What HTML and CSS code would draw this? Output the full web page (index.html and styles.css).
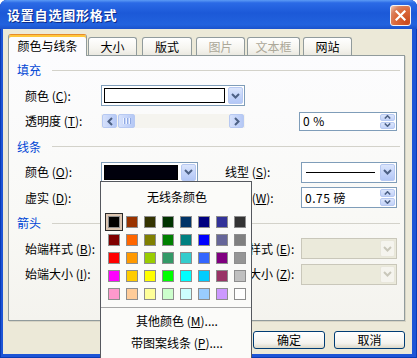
FILE: index.html
```html
<!DOCTYPE html>
<html lang="zh-CN">
<head>
<meta charset="utf-8">
<title>设置自选图形格式</title>
<link rel="stylesheet" href="styles.css">
</head>
<body>
<div class="window">
  <div class="titlebar">
    <span class="title">设置自选图形格式</span>
    <span class="close"><svg width="11" height="11" viewBox="0 0 11 11"><path d="M1.5 1.5 L9.5 9.5 M9.5 1.5 L1.5 9.5" stroke="#fff" stroke-width="2.2" stroke-linecap="square"/></svg></span>
  </div>
  <div class="client">
    <div class="tabs">
      <div class="tab active">颜色与线条</div>
      <div class="tab t-size">大小</div>
      <div class="tab t-layout">版式</div>
      <div class="tab t-pic disabled">图片</div>
      <div class="tab t-text disabled">文本框</div>
      <div class="tab t-web">网站</div>
    </div>
    <div class="panel">
      <div class="grp h26"><span>填充</span></div>
      <div class="row h25">
        <span class="lbl">颜色 (<u>C</u>):</span>
        <div class="combo w144">
          <div class="cval fill-white"></div>
          <span class="ddbtn"><svg width="9" height="6" viewBox="0 0 9 6"><path d="M1 1 L4.5 4.5 L8 1" fill="none" stroke="#4d6185" stroke-width="2"/></svg></span>
        </div>
      </div>
      <div class="row h26">
        <span class="lbl">透明度 (<u>T</u>):</span>
        <div class="slider">
          <span class="sbtn"><svg width="6" height="9" viewBox="0 0 6 9"><path d="M5 1 L1.5 4.5 L5 8" fill="none" stroke="#4d6185" stroke-width="2"/></svg></span>
          <span class="thumb"><i></i><i></i><i></i></span>
          <span class="track"></span>
          <span class="sbtn"><svg width="6" height="9" viewBox="0 0 6 9"><path d="M1 1 L4.5 4.5 L1 8" fill="none" stroke="#4d6185" stroke-width="2"/></svg></span>
        </div>
        <div class="spin spin-tr">
          <span class="sval">0 %</span>
          <span class="sbtns">
            <span class="sb"><svg width="7" height="4" viewBox="0 0 7 4"><path d="M0.8 3.5 L3.5 0.8 L6.2 3.5" fill="none" stroke="#4d6185" stroke-width="1.6"/></svg></span>
            <span class="sb"><svg width="7" height="4" viewBox="0 0 7 4"><path d="M0.8 0.5 L3.5 3.2 L6.2 0.5" fill="none" stroke="#4d6185" stroke-width="1.6"/></svg></span>
          </span>
        </div>
      </div>
      <div class="grp h25"><span>线条</span></div>
      <div class="row h26">
        <span class="lbl">颜色 (<u>O</u>):</span>
        <div class="combo w97">
          <div class="cval fill-black"></div>
          <span class="ddbtn"><svg width="9" height="6" viewBox="0 0 9 6"><path d="M1 1 L4.5 4.5 L8 1" fill="none" stroke="#4d6185" stroke-width="2"/></svg></span>
        </div>
        <span class="lbl rl">线型 (<u>S</u>):</span>
        <div class="combo w96">
          <div class="cval line"><i></i></div>
          <span class="ddbtn"><svg width="9" height="6" viewBox="0 0 9 6"><path d="M1 1 L4.5 4.5 L8 1" fill="none" stroke="#4d6185" stroke-width="2"/></svg></span>
        </div>
      </div>
      <div class="row h25">
        <span class="lbl">虚实 (<u>D</u>):</span>
        <div class="combo w97">
          <div class="cval line"><i></i></div>
          <span class="ddbtn"><svg width="9" height="6" viewBox="0 0 9 6"><path d="M1 1 L4.5 4.5 L8 1" fill="none" stroke="#4d6185" stroke-width="2"/></svg></span>
        </div>
        <span class="lbl rl">粗细 (<u>W</u>):</span>
        <div class="spin w96">
          <span class="sval">0.75 磅</span>
          <span class="sbtns">
            <span class="sb"><svg width="7" height="4" viewBox="0 0 7 4"><path d="M0.8 3.5 L3.5 0.8 L6.2 3.5" fill="none" stroke="#4d6185" stroke-width="1.6"/></svg></span>
            <span class="sb"><svg width="7" height="4" viewBox="0 0 7 4"><path d="M0.8 0.5 L3.5 3.2 L6.2 0.5" fill="none" stroke="#4d6185" stroke-width="1.6"/></svg></span>
          </span>
        </div>
      </div>
      <div class="grp h26"><span>箭头</span></div>
      <div class="row h25">
        <span class="lbl">始端样式 (<u>B</u>):</span>
        <div class="combo w97 dis">
          <div class="cval"></div>
          <span class="ddbtn"><svg width="9" height="6" viewBox="0 0 9 6"><path d="M1 1 L4.5 4.5 L8 1" fill="none" stroke="#c9c7ba" stroke-width="2"/></svg></span>
        </div>
        <span class="lbl rl">末端样式 (<u>E</u>):</span>
        <div class="combo w96 dis">
          <div class="cval"></div>
          <span class="ddbtn"><svg width="9" height="6" viewBox="0 0 9 6"><path d="M1 1 L4.5 4.5 L8 1" fill="none" stroke="#c9c7ba" stroke-width="2"/></svg></span>
        </div>
      </div>
      <div class="row h26">
        <span class="lbl">始端大小 (<u>I</u>):</span>
        <div class="combo w97 dis">
          <div class="cval"></div>
          <span class="ddbtn"><svg width="9" height="6" viewBox="0 0 9 6"><path d="M1 1 L4.5 4.5 L8 1" fill="none" stroke="#c9c7ba" stroke-width="2"/></svg></span>
        </div>
        <span class="lbl rl">末端大小 (<u>Z</u>):</span>
        <div class="combo w96 dis">
          <div class="cval"></div>
          <span class="ddbtn"><svg width="9" height="6" viewBox="0 0 9 6"><path d="M1 1 L4.5 4.5 L8 1" fill="none" stroke="#c9c7ba" stroke-width="2"/></svg></span>
        </div>
      </div>
    </div>
    <div class="btns">
      <span class="btn">确定</span>
      <span class="btn">取消</span>
    </div>
  </div>
  <div class="popup">
    <div class="ptitle">无线条颜色</div>
    <div class="grid">
      <span class="cell sel"><i style="--c:#000000"></i></span>
      <span class="cell"><i style="--c:#993300"></i></span>
      <span class="cell"><i style="--c:#333300"></i></span>
      <span class="cell"><i style="--c:#003300"></i></span>
      <span class="cell"><i style="--c:#003366"></i></span>
      <span class="cell"><i style="--c:#000080"></i></span>
      <span class="cell"><i style="--c:#333399"></i></span>
      <span class="cell"><i style="--c:#333333"></i></span>
      <span class="cell"><i style="--c:#800000"></i></span>
      <span class="cell"><i style="--c:#ff6600"></i></span>
      <span class="cell"><i style="--c:#808000"></i></span>
      <span class="cell"><i style="--c:#008000"></i></span>
      <span class="cell"><i style="--c:#008080"></i></span>
      <span class="cell"><i style="--c:#0000ff"></i></span>
      <span class="cell"><i style="--c:#666699"></i></span>
      <span class="cell"><i style="--c:#808080"></i></span>
      <span class="cell"><i style="--c:#ff0000"></i></span>
      <span class="cell"><i style="--c:#ff9900"></i></span>
      <span class="cell"><i style="--c:#99cc00"></i></span>
      <span class="cell"><i style="--c:#339966"></i></span>
      <span class="cell"><i style="--c:#33cccc"></i></span>
      <span class="cell"><i style="--c:#3366ff"></i></span>
      <span class="cell"><i style="--c:#800080"></i></span>
      <span class="cell"><i style="--c:#969696"></i></span>
      <span class="cell"><i style="--c:#ff00ff"></i></span>
      <span class="cell"><i style="--c:#ffcc00"></i></span>
      <span class="cell"><i style="--c:#ffff00"></i></span>
      <span class="cell"><i style="--c:#00ff00"></i></span>
      <span class="cell"><i style="--c:#00ffff"></i></span>
      <span class="cell"><i style="--c:#00ccff"></i></span>
      <span class="cell"><i style="--c:#993366"></i></span>
      <span class="cell"><i style="--c:#c0c0c0"></i></span>
      <span class="cell"><i style="--c:#ff99cc"></i></span>
      <span class="cell"><i style="--c:#ffcc99"></i></span>
      <span class="cell"><i style="--c:#ffff99"></i></span>
      <span class="cell"><i style="--c:#ccffcc"></i></span>
      <span class="cell"><i style="--c:#ccffff"></i></span>
      <span class="cell"><i style="--c:#99ccff"></i></span>
      <span class="cell"><i style="--c:#cc99ff"></i></span>
      <span class="cell"><i style="--c:#ffffff"></i></span>
    </div>
    <div class="psep"></div>
    <div class="pitem">其他颜色 (<u>M</u>)....</div>
    <div class="pitem">带图案线条 (<u>P</u>)....</div>
  </div>
</div>
</body>
</html>
```
FILE: styles.css
```css
* { box-sizing: border-box; }
html, body { margin: 0; padding: 0; }
body {
  width: 417px;
  height: 358px;
  overflow: hidden;
  position: relative;
  background: #fff;
  font-family: "Noto Sans CJK SC", "Noto Sans", sans-serif;
  font-size: 12px;
  line-height: 16px;
  color: #000;
}
u { text-decoration: underline; text-underline-offset: 1px; }

.window {
  width: 417px;
  height: 358px;
  display: flex;
  flex-direction: column;
  background: #1d55d6;
  border-radius: 7px 7px 0 0;
  box-shadow: inset 1px 0 #0a3bb5, inset -1px 0 #0a3bb5, inset 0 -1px #0a3bb5;
}

.titlebar {
  height: 29px;
  flex: none;
  display: flex;
  align-items: center;
  padding: 1px 6px 0 7px;
  border-radius: 7px 7px 0 0;
  background: linear-gradient(180deg, #5c9bf5 0, #2b6ae6 10%, #1c59d8 45%, #2262de 85%, #1b52cc 100%);
}
.title {
  color: #fff;
  font-weight: bold;
  font-size: 13px;
  letter-spacing: 0.8px;
  text-shadow: 1px 1px 0 #0c2a8a;
}
.close {
  margin-left: auto;
  width: 21px;
  height: 21px;
  border: 1px solid #f4f4f4;
  border-radius: 3px;
  display: flex;
  align-items: center;
  justify-content: center;
  background: radial-gradient(circle at 85% 85%, #c94a1c 0, #dc6a3c 55%, #d98260 75%, #f2c0a8 95%);
}

.client {
  flex: 1;
  margin: 0 5px 4px 3px;
  background: #ece9d8;
  padding: 5px 7px 0 5px;
  display: flex;
  flex-direction: column;
}

.tabs {
  display: flex;
  align-items: flex-end;
  height: 22px;
  flex: none;
  position: relative;
  z-index: 1;
}
.tab {
  height: 18px;
  margin-bottom: 1px;
  border: 1px solid #919b9c;
  border-bottom: none;
  border-radius: 3px 3px 0 0;
  background: linear-gradient(180deg, #ffffff 0, #f6f5f0 60%, #ebe9e1 100%);
  display: flex;
  align-items: center;
  justify-content: center;
  padding-top: 1px;
}
.tab.active {
  width: 79px;
  height: 22px;
  margin-bottom: 0;
  background: #fcfcfe;
  border-top: 1px solid #e68b2c;
  box-shadow: inset 0 2px 0 #ffc73c;
  padding-top: 0;
}
.t-size { width: 49px; margin-left: 1px; }
.t-layout { width: 50px; margin-left: 5px; }
.t-pic { width: 49px; margin-left: 4px; }
.t-text { width: 53px; margin-left: 2px; }
.t-web { width: 49px; margin-left: 3px; }
.tab.disabled { color: #aca899; }

.panel {
  margin-top: -1px;
  height: 266px;
  flex: none;
  border: 1px solid #919b9c;
  background: linear-gradient(180deg, #fcfcfe 0, #f9f9f6 60%, #f4f3ee 100%);
  box-shadow: 1px 1px 0 #d6d3c4;
  padding: 1px 4px 0 8px;
}

.h26 { height: 26px; }
.h25 { height: 25px; }

.grp {
  display: flex;
  align-items: center;
  color: #0046d5;
}
.grp::after {
  content: "";
  flex: 1;
  height: 1px;
  margin-left: 11px;
  background: #d3d2ca;
}

.row {
  display: flex;
  align-items: center;
  padding-left: 8px;
}
.lbl {
  width: 76px;
  flex: none;
  white-space: nowrap;
}
.lbl.rl { margin-left: 27px; }

.combo {
  height: 21px;
  flex: none;
  border: 1px solid #7f9db9;
  background: #fff;
  display: flex;
  align-items: stretch;
  padding: 1px;
}
.w144 { width: 144px; }
.w97 { width: 97px; }
.w96 { width: 96px; }
.cval {
  flex: 1;
  margin: 1px 3px 1px 1px;
}
.fill-white { border: 1px solid #000; background: #fff; }
.fill-black { border: 1px solid #000; background: #00000c; }
.cval.line { display: flex; align-items: center; padding: 0 2px; }
.cval.line i { display: block; flex: 1; height: 1px; background: #000; }
.ddbtn {
  width: 15px;
  flex: none;
  border: 1px solid #b7c9f2;
  border-radius: 2px;
  background: linear-gradient(180deg, #dce6fc 0, #c5d5fa 50%, #b3c7f6 100%);
  display: flex;
  align-items: center;
  justify-content: center;
}
.combo.dis {
  border-color: #c9c7ba;
  background: #ebeadb;
}
.combo.dis .ddbtn {
  border-color: #e8e6da;
  background: #f5f4ee;
}

.slider {
  width: 144px;
  height: 14px;
  flex: none;
  display: flex;
  padding: 0 1px;
  background: #f5f4ef;
}
.sbtn, .thumb {
  width: 15px;
  flex: none;
  border: 1px solid #b7c9f2;
  border-radius: 2px;
  background: linear-gradient(90deg, #d6e1fb 0, #c2d2f8 60%, #b5c8f5 100%);
  display: flex;
  align-items: center;
  justify-content: center;
}
.thumb { width: 17px; margin-left: 1px; gap: 1px; }
.thumb i { display: block; width: 2px; height: 6px; background: #eef3fe; border-right: 1px solid #8fa9e3; }
.track { flex: 1; }

.spin {
  height: 21px;
  flex: none;
  border: 1px solid #7f9db9;
  background: #fff;
  display: flex;
  align-items: stretch;
  padding: 1px;
}
.spin-tr { width: 98px; height: 19px; margin-left: 54px; }
.sval { flex: 1; padding-left: 2px; display: flex; align-items: center; letter-spacing: 0.5px; }
.sbtns { width: 15px; display: flex; flex-direction: column; gap: 1px; }
.sb {
  flex: 1;
  border: 1px solid #b7c9f2;
  border-radius: 2px;
  background: linear-gradient(180deg, #dce6fc 0, #c2d2f8 100%);
  display: flex;
  align-items: center;
  justify-content: center;
}

.btns {
  display: flex;
  justify-content: flex-end;
  gap: 9px;
  margin-top: 10px;
}
.btn {
  width: 72px;
  height: 18px;
  border: 1px solid #003c74;
  border-radius: 3px;
  background: linear-gradient(180deg, #ffffff 0, #f4f3ee 70%, #dcd8c8 100%);
  display: flex;
  align-items: center;
  justify-content: center;
}
.btn + .btn { width: 71px; }

.popup {
  position: absolute;
  left: 100px;
  top: 181px;
  width: 152px;
  height: 185px;
  border: 1px solid #55585e;
  background: #fbfbf9;
  padding: 0 2px 0 4px;
}
.ptitle {
  text-align: center;
  margin-top: 7px;
  height: 16px;
}
.grid {
  margin-top: 8px;
  display: grid;
  grid-template-columns: repeat(8, 18px);
  grid-auto-rows: 18px;
}
.cell {
  display: flex;
  align-items: center;
  justify-content: center;
}
.cell i {
  display: block;
  width: 12px;
  height: 12px;
  border: 1px solid #8e8e8e;
  background: var(--c);
}
.cell.sel {
  border: 1px solid #2a2a2a;
  background: #dcc6b2;
}
.psep {
  height: 1px;
  margin: 4px -2px 0 -4px;
  background: #a7a7a7;
}
.pitem {
  height: 22px;
  display: flex;
  align-items: center;
  justify-content: center;
}
.psep + .pitem { margin-top: 2px; }
```
